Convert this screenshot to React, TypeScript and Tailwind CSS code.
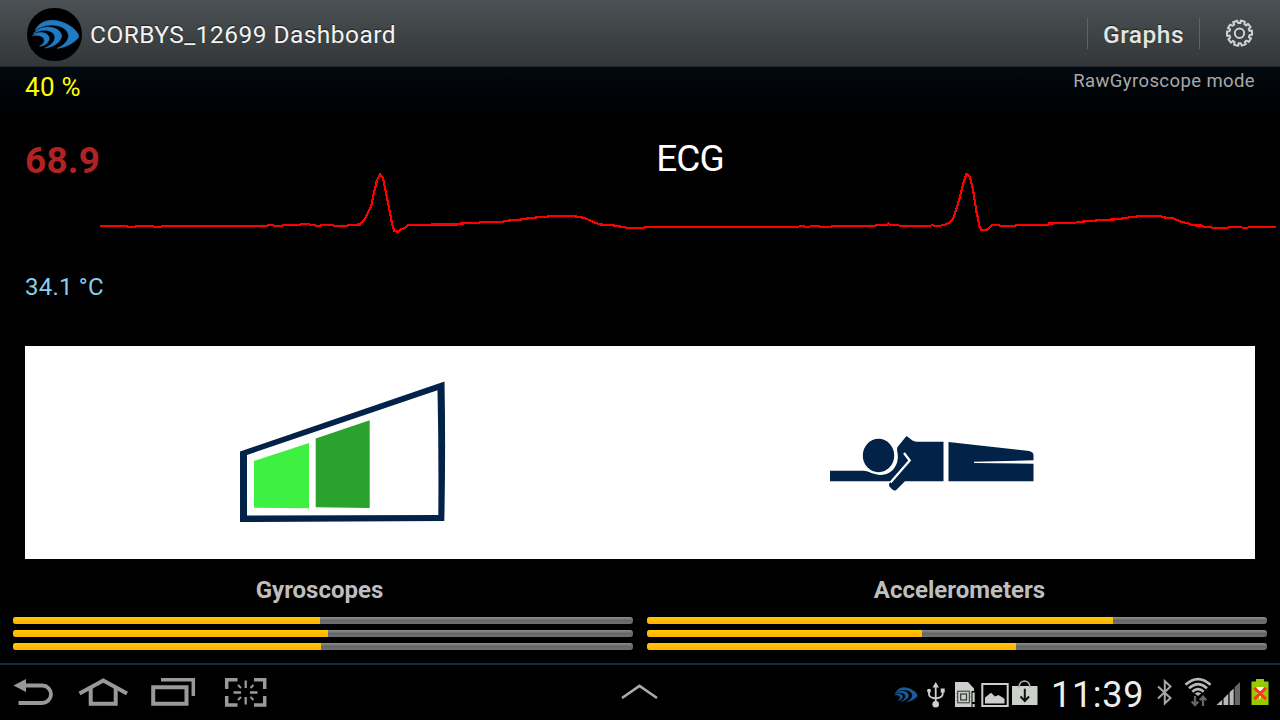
import React from "react";

const ECG_POINTS =
  "100,226 126,226 128,226.8 135,226.8 136,226 152,226 154,226.8 161,226.8 163,226 267,226 268,225 273,225 274,225.8 282,225.8 283,225 300,225 301,223.8 308,223.8 310,224.8 314,224.8 316,225.8 320,225.8 322,225 332,225 334,225.8 347,225.8 348,225 360,224.5 364,220 371,207 373,197 377,180 380,174 383,178 387,198 390,213 392.5,226 394.6,231.3 398,231.6 401,229.4 404.5,228 408.5,224.7 458,224.5 460,223.5 479,223 480,222 503,221.8 505,220.8 518,220 527,218.5 536,217.5 554,216 573,216 583,217.7 588,219.5 593.5,222 599,224.3 615,225.6 627,227.8 644,227.8 646,227 798,227 800,226 804,226 805,227 809,227 811,226 819,226 820,227 831,227 832,226 875,226 876,225 887,225 888.5,223.8 890,225 898,225 900,226 930,226 932,225 935,226 940,226 942,225 946,224.5 950,222 953.5,218 956,210 960,197 963.7,182 966.5,174 970,177 973,190 976.7,213 979.6,226.7 981.6,230.3 986.5,230 990,226.7 993,224.7 998,224.7 1000,225.6 1015,225.6 1017,224.7 1048,224.7 1049,223.5 1075,223 1077,222 1090,221 1102,220 1117,219.3 1127,217.7 1141,216 1160,216 1164,217.5 1172,218 1177,220 1181,221.7 1187,223 1192,225.3 1202,225.6 1204,226.7 1210,226.7 1213,228 1228,228 1229,227 1241,227 1243,228 1247,228 1249,227 1276,227";

function Swoosh({ className }: { className: string }) {
  return (
    <svg className={className} viewBox="32 18 48 30" fill="currentColor" stroke="currentColor" strokeWidth="0.6" strokeLinejoin="round">
      <path d="M35 29.500C38.500 22.500 45 19 53 19.200C64 20 75 26.500 78.300 33.500C79.100 35.200 78.800 36.600 77.300 38C72 43 65 46.800 57 47.300C63.500 44.500 68.700 40 68.500 34.500C68 27.500 59.500 23.800 51 23.900C44.500 24.100 39 26.500 35 29.500Z" />
      <path d="M33.500 32.700C37 28.500 43 25.500 50 26.200C57 26.900 61.200 30.500 61.500 34.500C61.700 41 53 46.300 45 47C51 44.300 55 41 54.800 36C54.500 31.500 49.500 29.200 44.500 29.300C40 29.500 36.500 30.700 33.500 32.700Z" />
      <path d="M32.500 34.700C36 31.500 41 30.700 45 32.200C48 33.400 49.500 35.500 49.200 38C48.600 42.300 44.500 44.800 39.500 45.200C43.300 43.300 45 41 44 38C42.500 34.500 37.500 33.500 32.500 34.700Z" />
    </svg>
  );
}

function gearPath(cx: number, cy: number, teeth: number, outer: number, inner: number) {
  const pts: string[] = [];
  for (let i = 0; i < teeth; i++) {
    const a = (i * 2 * Math.PI) / teeth - Math.PI / 2 + 0.3;
    const offsets: [number, number][] = [
      [-0.2, outer],
      [0.14, outer],
      [0.2, inner],
      [0.42, inner],
    ];
    for (const [o, r] of offsets) {
      pts.push(`${(cx + r * Math.cos(a + o)).toFixed(2)} ${(cy + r * Math.sin(a + o)).toFixed(2)}`);
    }
  }
  return `M${pts.join("L")}Z`;
}

function Header() {
  return (
    <header className="flex h-[66px] shrink-0 items-center bg-linear-to-b from-[#4b5154] to-[#33373a] pl-[27px] pr-[26px] text-[#f3f3f3]">
      <div className="mt-[2px] flex h-[53px] w-[55px] items-center justify-center rounded-full bg-black">
        <Swoosh className="ml-[2px] h-[30px] w-[48px] text-[#1f7bc3]" />
      </div>
      <h1 className="ml-[8px] mt-[4px] grow whitespace-nowrap text-[24.5px] leading-[30px] tracking-[0.45px] [text-shadow:0_-1px_1px_#0008]">
        CORBYS_12699 Dashboard
      </h1>
      <div className="flex h-[31px] w-[113px] items-center justify-center border-x border-[#5f6567]">
        <span className="mt-[3px] text-[24.5px] leading-[30px] tracking-[0.5px] font-medium text-[#e4e4e4] [text-shadow:0_-1px_1px_#0008]">Graphs</span>
      </div>
      <svg className="ml-[25px] size-[29px]" viewBox="0 0 29 29" fill="none" stroke="#cfd1d2" strokeWidth="2" strokeLinejoin="round">
        <path d={gearPath(14.5, 14.2, 10, 12.7, 10.2)} />
        <circle cx="14.500" cy="14.200" r="4.700" />
      </svg>
    </header>
  );
}

function Vitals() {
  return (
    <section className="flex h-[279px] shrink-0">
      <div className="flex w-[100px] shrink-0 flex-col whitespace-nowrap pl-[25px]">
        <span className="mt-[4px] text-[26px] leading-[32px] tracking-[0.3px] text-[#ffff00]">40 %</span>
        <span className="mt-[36px] text-[37px] leading-[44px] tracking-[0.2px] font-bold text-[#b22222]">68.9</span>
        <span className="mt-[88px] text-[24px] leading-[32px] tracking-[0.2px] text-[#87ceeb]">34.1 °C</span>
      </div>
      <div className="flex w-[1180px] flex-col">
        <span className="mr-[25px] mt-[2px] self-end text-[18.5px] leading-[24px] tracking-[0.4px] text-[#a9a9a9]">RawGyroscope mode</span>
        <span className="mt-[44px] self-center text-[37px] leading-[44px] tracking-[-1px] text-white">ECG</span>
        <svg className="mt-[-11px] h-[70px] w-[1180px]" viewBox="100 170 1180 70" fill="none" shapeRendering="crispEdges">
          <polyline points={ECG_POINTS} stroke="#ff0000" strokeWidth="2.2" />
        </svg>
      </div>
    </section>
  );
}

function StatusPanel() {
  return (
    <section className="mx-[25px] flex h-[213px] shrink-0 bg-white">
      <svg className="h-[213px] w-[615px]" viewBox="25 346 615 213">
        <path d="M240 451.500L444.500 381.500Q445.800 450 444.300 521L240 522Z" fill="#022347" />
        <path d="M247 455L437.500 390.300Q438.800 450 438.300 515L247 515.500Z" fill="#fff" />
        <path d="M254 461L309 443V508.300L254 507.800Z" fill="#3df042" />
        <path d="M315.700 438.500L369.700 420.300V508L315.700 507.300Z" fill="#29a22e" />
      </svg>
      <svg className="h-[213px] w-[615px]" viewBox="640 346 615 213">
        <g fill="#022347">
          <path d="M830 470.700H864C872 471.500 877 475.500 883 474.800C893 473.500 898.500 464 897.700 456C897.400 452 896.500 449 897.500 447L906.500 436L912.500 440.500C914 441.500 916 441.700 918 441.700H943.500V481.300H905L896 490.300Q893.500 491.500 889.500 486.500C888.500 485 889 484 890 482.500V481.300H830Z" />
          <path d="M948.500 442L1029 451Q1033.500 452 1033.500 455V460.300L974 461.800V463L1033.500 463.700V481.300H948.500Z" />
        </g>
        <circle cx="878.500" cy="455.500" r="19" fill="#fff" />
        <ellipse cx="878.500" cy="455.500" rx="15.700" ry="16.700" fill="#022347" />
        <path d="M904 453L909.700 460.500L890.500 482.500" fill="none" stroke="#fff" strokeWidth="2.300" />
      </svg>
    </section>
  );
}

function Bar({ value }: { value: number }) {
  return (
    <div className="h-[7px] overflow-hidden rounded-[3px] bg-linear-to-b from-[#909090] via-[#666] to-[#707070]">
      <div className="h-full bg-linear-to-b from-[#ffc900] to-[#ffb000]" style={{ width: `${value}px` }} />
    </div>
  );
}

function Sensors({ title, values }: { title: string; values: number[] }) {
  return (
    <div className="flex w-[620px] flex-col gap-[6px]">
      <h2 className="mb-[6px] whitespace-nowrap text-center text-[24px] leading-[30px] font-bold text-[#bebebe]">{title}</h2>
      {values.map((v, i) => (
        <Bar key={i} value={v} />
      ))}
    </div>
  );
}

function NavBar() {
  return (
    <footer className="flex h-[57px] shrink-0 items-start border-t-2 border-[#0b2c3a] bg-black">
      <svg className="h-[55px] w-[290px] shrink-0" viewBox="0 665 290 55" fill="none" stroke="#999" strokeWidth="4">
        <path d="M25 685.500H42.500C47 685.500 51 689.500 51 694.200S47 703 42.500 703H18.500" strokeWidth="3.800" />
        <path d="M13.500 685.500L26 679V692Z" fill="#999" stroke="none" />
        <path d="M79.500 693.500L103.300 680.500L127 693.500" />
        <path d="M90.700 688V703.800H115.700V688" />
        <path d="M153.200 687.200H186.500V703.800H153.200Z" />
        <path d="M161 679.700H193.300V696" strokeWidth="3.500" />
        <path d="M226.700 689V679.700H237.500M254 679.700H264.700V689M264.700 696V705H254M237.500 705H226.700V696" strokeWidth="3.500" />
        <path d="M245.700 680.500V688M245.700 697V704.500M233.500 692.500H241M250 692.500H257.500" strokeWidth="2.300" />
        <path d="M238 685L241 688M253.500 685L250.500 688M238 700L241 697M253.500 700L250.500 697" strokeWidth="2" />
      </svg>
      <div className="flex grow pl-[331px]">
        <svg className="mt-[18px] h-[18px] w-[38px]" viewBox="0 0 38 18" fill="none" stroke="#aaa" strokeWidth="2.700">
          <path d="M1 15L18.500 3L36 15" />
        </svg>
      </div>
      <div className="flex shrink-0">
        <Swoosh className="mt-[22px] h-[15px] w-[24px] text-[#1b5c96]" />
        <svg className="h-[55px] w-[122px]" viewBox="918 665 122 55">
          <g fill="#cbd0cb">
            <path d="M935.700 682L939 687.500H932.500Z" />
            <circle cx="935.700" cy="704.300" r="3.300" />
            <circle cx="929" cy="690.700" r="2" />
            <path d="M940.700 688.500H944.700V692.500H940.700Z" />
            <path d="M935.700 686V703M929 691V694.500Q929 697.500 935.700 698.500Q942.700 697.500 942.700 694V691" fill="none" stroke="#cbd0cb" strokeWidth="1.800" />
            <path d="M955 682H968L974 688.500V691H971.500V707H955Z" />
            <path d="M972.500 692.500H974.700V702H972.500ZM972.500 704H974.700V707H972.500Z" />
            <path d="M956.500 693.500H970.500M956.500 697H970.500M956.500 700.500H970.500" stroke="#555" strokeWidth=".8" />
            <rect x="957.700" y="691.200" width="11.600" height="11.600" stroke="#333" strokeWidth="1" />
            <rect x="960.700" y="694" width="5.800" height="6" stroke="#333" strokeWidth="1.200" />
            <rect x="982.300" y="684" width="25.400" height="22" fill="none" stroke="#cbd0cb" strokeWidth="2" />
            <path d="M985 703.500V697.500L991 692.800L995 696.500L998.500 695L1004.500 698.800V703.500Z" />
            <path d="M1012 686H1037.500V705H1012Z" />
            <path d="M1019 687.500C1019 679 1030 679 1030 687.500" fill="none" stroke="#a5aaa5" strokeWidth="1.800" />
            <path d="M1024.800 688.700V701M1020.500 696.500L1024.800 701L1029 696.500" fill="none" stroke="#111" strokeWidth="2" />
          </g>
        </svg>
        <span className="w-[105px] whitespace-nowrap pl-[11px] pt-[8px] text-[36px] leading-[44px] tracking-[0.7px] text-[#ededed]">11:39</span>
        <svg className="h-[55px] w-[135px]" viewBox="1145 665 135 55">
          <path d="M1158 686.500L1170.500 698L1164.800 703.500V681L1170.500 686.500L1158 698.500" fill="none" stroke="#a6a6a6" strokeWidth="2" />
          <g fill="none" stroke="#b8b8b8" strokeWidth="2.700">
            <path d="M1185.500 684.700Q1198 673.500 1210.500 684.700" />
            <path d="M1189 688.300Q1198 680 1207 688.300" />
            <path d="M1192.300 691.700Q1198 686.500 1203.700 691.700" />
          </g>
          <path d="M1194.700 693.500Q1198 690.800 1201.300 693.500L1198 696Z" fill="#b4b4b4" />
          <path d="M1195 696V705M1191.700 701.500L1195 705L1198.300 701.500M1203 706V697M1199.700 700.200L1203 696.700L1206.300 700.200" fill="none" stroke="#666" strokeWidth="2.300" />
          <path d="M1216.500 705L1222.200 699.800V705ZM1223.500 705V698.500L1228.300 693.800V705ZM1229.600 705V692.300L1233.700 688.500V705Z" fill="#b9b9b9" />
          <path d="M1234.700 705V687L1240 682V705Z" fill="#666" />
          <path d="M1256 679H1264V681.500H1268.500V705H1251.500V681.500H1256Z" fill="#99c900" />
          <path d="M1256.500 687H1264L1261.500 692.500L1263.500 692L1259 700L1259.500 694H1257Z" fill="#fff" />
          <path d="M1254.200 687.800L1266 699.200M1266 687.800L1254.200 699.200" stroke="#f63b19" strokeWidth="3" />
        </svg>
      </div>
    </footer>
  );
}

export default function App() {
  return (
    <div className="flex h-[720px] w-[1280px] flex-col overflow-hidden bg-black font-[Roboto,sans-serif]">
      <Header />
      <main className="flex h-[597px] shrink-0 flex-col border-t border-[#24282a] bg-linear-to-b from-[#000b12] to-black to-[80px]">
        <Vitals />
        <StatusPanel />
        <div className="flex justify-between px-[13px] pt-[16px]">
          <div className="[&_h2]:-ml-[7px]">
            <Sensors title="Gyroscopes" values={[307, 315, 308]} />
          </div>
          <div className="[&_h2]:ml-[5px]">
            <Sensors title="Accelerometers" values={[466, 275, 369]} />
          </div>
        </div>
      </main>
      <NavBar />
    </div>
  );
}
